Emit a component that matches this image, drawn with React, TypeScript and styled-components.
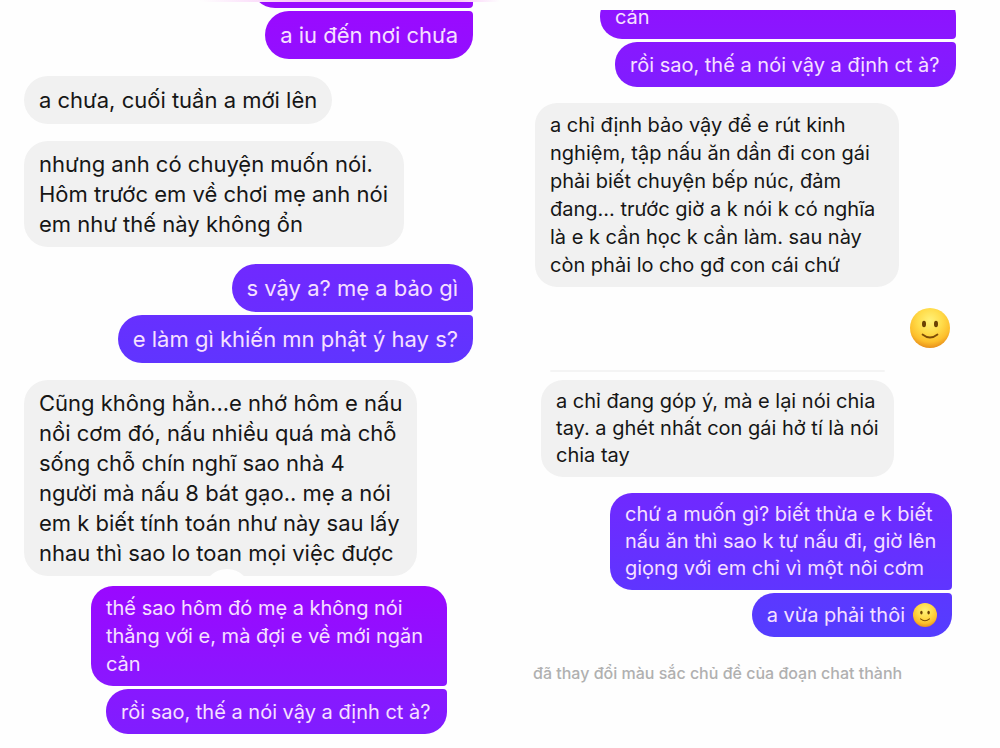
import React from 'react';
import styled, { createGlobalStyle, css } from 'styled-components';

const GlobalStyle = createGlobalStyle`
  * { box-sizing: border-box; }
  body {
    margin: 0;
    background: #fefefe;
    color: #161616;
    font-family: Inter, "Noto Sans", sans-serif;
  }
`;

type Scale = 'large' | 'medium' | 'small';
type Join = 'none' | 'top' | 'bottom' | 'both';

const scales: Record<Scale, { font: number; line: number; min: number; radius: number }> = {
  large: { font: 22, line: 30, min: 48, radius: 24 },
  medium: { font: 20, line: 28, min: 45, radius: 22 },
  small: { font: 20, line: 27, min: 44, radius: 22 },
};

const Page = styled.main`
  display: grid;
  grid-template-columns: 1fr 1fr;
  align-items: start;
`;

const Column = styled.section<{ $top?: number }>`
  display: flex;
  flex-direction: column;
  padding-top: ${p => p.$top ?? 0}px;
`;

const Thread = styled.div<{ $scale: Scale; $left: number; $right: number; $top?: number }>`
  position: relative;
  display: flex;
  flex-direction: column;
  gap: ${p => (p.$scale === 'large' ? 17 : 16)}px;
  padding: ${p => p.$top ?? 0}px ${p => p.$right}px 0 ${p => p.$left}px;
  font-size: ${p => scales[p.$scale].font}px;
  line-height: ${p => scales[p.$scale].line}px;
`;

const Group = styled.div`
  display: flex;
  flex-direction: column;
  align-items: flex-end;
  gap: 3px;
`;

const bubble = css<{ $scale: Scale; $width?: number }>`
  display: flex;
  flex-direction: column;
  justify-content: center;
  min-width: ${p => p.$width ?? 0}px;
  min-height: ${p => scales[p.$scale].min}px;
  padding: 8px 15px;
  white-space: nowrap;
`;

const Received = styled.div<{ $scale: Scale; $width?: number }>`
  ${bubble}
  align-self: flex-start;
  border-radius: ${p => scales[p.$scale].radius}px;
  background: #f1f1f1;
`;

const Sent = styled.div<{ $scale: Scale; $width?: number; $from: string; $to: string; $join: Join }>`
  ${bubble}
  flex-shrink: 0;
  border-radius: ${p => scales[p.$scale].radius}px;
  ${p => (p.$join === 'top' || p.$join === 'both') && 'border-top-right-radius: 4px;'}
  ${p => (p.$join === 'bottom' || p.$join === 'both') && 'border-bottom-right-radius: 4px;'}
  background: linear-gradient(${p => p.$from}, ${p => p.$to});
  color: #f6e0ff;
`;

const Cropped = styled.div<{ $height: number }>`
  display: flex;
  flex-direction: column;
  align-items: flex-end;
  justify-content: flex-end;
  align-self: stretch;
  height: ${p => p.$height}px;
  overflow: hidden;
`;

const TopEdge = styled.div`
  position: absolute;
  top: 0;
  left: 40%;
  right: 0;
  height: 2px;
  background: linear-gradient(90deg, #fefefe, #f9c4f7 35%, #f9c4f7 85%, #fefefe);
`;

const ScrollKnob = styled.div`
  position: absolute;
  left: 203px;
  bottom: -41px;
  width: 48px;
  height: 48px;
  border-radius: 50%;
  background: #fefefe;
`;

const Reaction = styled.div`
  display: flex;
  justify-content: flex-end;
  padding: 5px 6px 7px 0;
`;

const CroppedEdge = styled.hr`
  height: 2px;
  margin: 0 115px 0 50px;
  border: 0;
  border-radius: 2px;
  background: #f4f4f4;
`;

const WithEmoji = styled.span`
  display: flex;
  align-items: center;
  gap: 8px;
`;

const Notice = styled.p`
  margin: 0;
  padding: 25px 0 0 33px;
  color: #b0b0b0;
  font-size: 16px;
  font-weight: 500;
  line-height: 22px;
`;

function Smile({ size, id }: { size: number; id: string }) {
  return (
    <svg width={size} height={size} viewBox="0 0 40 40" role="img" aria-label="slightly smiling face">
      <defs>
        <radialGradient id={id} cx="50%" cy="32%" r="68%">
          <stop offset="0" stopColor="#fff27a" />
          <stop offset="0.45" stopColor="#ffdc4a" />
          <stop offset="0.78" stopColor="#fdbf2c" />
          <stop offset="1" stopColor="#e8901c" />
        </radialGradient>
      </defs>
      <circle cx="20" cy="20" r="20" fill={`url(#${id})`} />
      <ellipse cx="14" cy="16" rx="2" ry="3.2" fill="#6b4205" />
      <ellipse cx="26" cy="16" rx="2" ry="3.2" fill="#6b4205" />
      <path d="M12.500 26.500Q20 32.500 27.500 26.500" fill="none" stroke="#7d4c06" strokeWidth="1.700" strokeLinecap="round" />
    </svg>
  );
}

const Lines = ({ text }: { text: string[] }) => (
  <>
    {text.map(line => (
      <span key={line}>{line}</span>
    ))}
  </>
);

export default function App() {
  return (
    <Page>
      <GlobalStyle />
      <Column>
        <Thread $scale="large" $left={24} $right={27}>
          <TopEdge />
          <Group>
            <Cropped $height={8}>
              <Sent $scale="large" $width={222} $from="#9a0cff" $to="#9a0cff" $join="bottom" />
            </Cropped>
            <Sent $scale="large" $width={207} $from="#9a0aff" $to="#930fff" $join="top">
              a iu đến nơi chưa
            </Sent>
          </Group>
          <Received $scale="large" $width={303}>a chưa, cuối tuần a mới lên</Received>
          <Received $scale="large" $width={380}>
            <Lines text={['nhưng anh có chuyện muốn nói.', 'Hôm trước em về chơi mẹ anh nói', 'em như thế này không ổn']} />
          </Received>
          <Group>
            <Sent $scale="large" $width={238} $from="#7029ff" $to="#6a2dff" $join="bottom">
              s vậy a? mẹ a bảo gì
            </Sent>
            <Sent $scale="large" $width={351} $from="#6730ff" $to="#6034ff" $join="top">
              e làm gì khiến mn phật ý hay s?
            </Sent>
          </Group>
          <Received $scale="large" $width={389}>
            <Lines
              text={[
                'Cũng không hẳn...e nhớ hôm e nấu',
                'nồi cơm đó, nấu nhiều quá mà chỗ',
                'sống chỗ chín nghĩ sao nhà 4',
                'người mà nấu 8 bát gạo.. mẹ a nói',
                'em k biết tính toán như này sau lấy',
                'nhau thì sao lo toan mọi việc được',
              ]}
            />
          </Received>
          <ScrollKnob />
        </Thread>
        <Thread $scale="medium" $left={24} $right={53} $top={10}>
          <Group>
            <Sent $scale="medium" $width={356} $from="#9a08ff" $to="#8a17ff" $join="bottom">
              <Lines text={['thế sao hôm đó mẹ a không nói', 'thẳng với e, mà đợi e về mới ngăn', 'cản']} />
            </Sent>
            <Sent $scale="medium" $width={341} $from="#8818ff" $to="#801dff" $join="top">
              rồi sao, thế a nói vậy a định ct à?
            </Sent>
          </Group>
        </Thread>
      </Column>

      <Column $top={10}>
        <Thread $scale="medium" $left={35} $right={44}>
          <Group>
            <Cropped $height={29}>
              <Sent $scale="medium" $width={356} $from="#8f10ff" $to="#8a17ff" $join="bottom">
                cản
              </Sent>
            </Cropped>
            <Sent $scale="medium" $width={341} $from="#8818ff" $to="#801dff" $join="top">
              rồi sao, thế a nói vậy a định ct à?
            </Sent>
          </Group>
          <Received $scale="medium" $width={364}>
            <Lines
              text={[
                'a chỉ định bảo vậy để e rút kinh',
                'nghiệm, tập nấu ăn dần đi con gái',
                'phải biết chuyện bếp núc, đảm',
                'đang... trước giờ a k nói k có nghĩa',
                'là e k cần học k cần làm. sau này',
                'còn phải lo cho gđ con cái chứ',
              ]}
            />
          </Received>
          <Reaction>
            <Smile size={40} id="smile-large" />
          </Reaction>
        </Thread>
        <Thread $scale="small" $left={0} $right={0} $top={15}>
          <CroppedEdge />
        </Thread>
        <Thread $scale="small" $left={41} $right={48} $top={8}>
          <Received $scale="small" $width={353}>
            <Lines text={['a chỉ đang góp ý, mà e lại nói chia', 'tay. a ghét nhất con gái hở tí là nói', 'chia tay']} />
          </Received>
          <Group>
            <Sent $scale="small" $width={342} $from="#7029ff" $to="#5f35ff" $join="bottom">
              <Lines text={['chứ a muốn gì? biết thừa e k biết', 'nấu ăn thì sao k tự nấu đi, giờ lên', 'giọng với em chỉ vì một nôi cơm']} />
            </Sent>
            <Sent $scale="small" $width={199} $from="#5c38ff" $to="#543dff" $join="top">
              <WithEmoji>
                a vừa phải thôi
                <Smile size={24} id="smile-small" />
              </WithEmoji>
            </Sent>
          </Group>
        </Thread>
        <Notice>đã thay đổi màu sắc chủ đề của đoạn chat thành</Notice>
      </Column>
    </Page>
  );
}
